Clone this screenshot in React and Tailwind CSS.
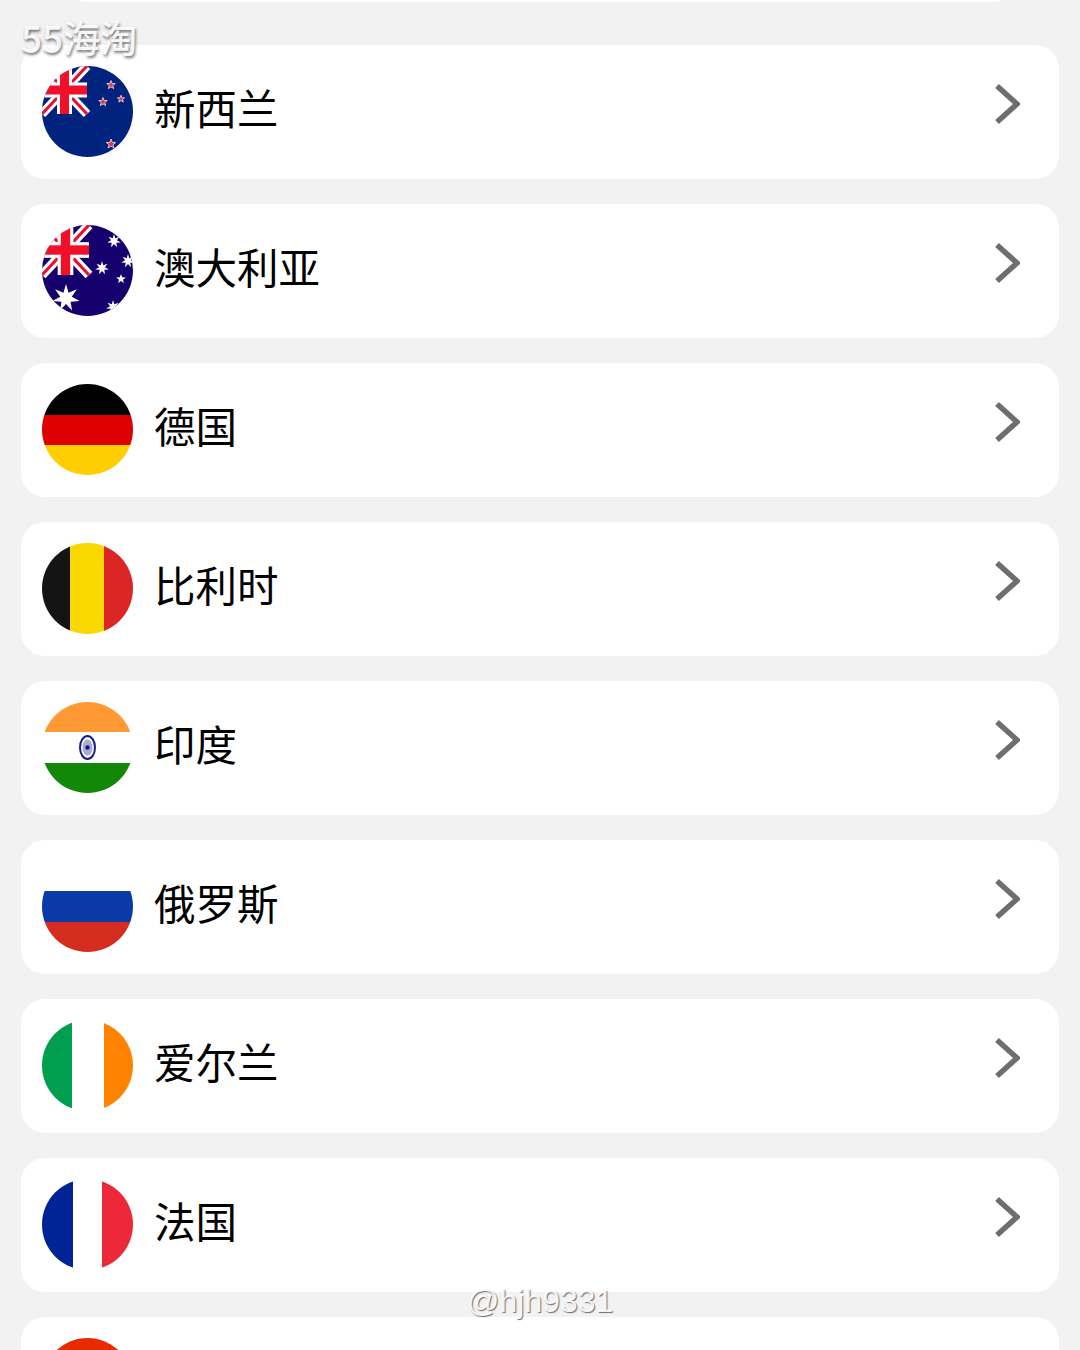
import React from 'react';

const starPoints = (cx, cy, r, n = 5, inner = 0.42) => {
  const pts = [];
  for (let i = 0; i < n * 2; i++) {
    const rad = i % 2 === 0 ? r : r * inner;
    const a = -Math.PI / 2 + (i * Math.PI) / n;
    pts.push(`${(cx + rad * Math.cos(a)).toFixed(2)},${(cy + rad * Math.sin(a)).toFixed(2)}`);
  }
  return pts.join(' ');
};

function UnionJack({ w, h }) {
  const t = w / 60;
  return (
    <g>
      <path d={`M0 0L${w} ${h}M${w} 0L0 ${h}`} stroke="#fff" strokeWidth={12 * t} />
      <path d={`M0 0L${w} ${h}M${w} 0L0 ${h}`} stroke="#e8112d" strokeWidth={4 * t} />
      <rect x={w / 2 - 10 * t} y="0" width={20 * t} height={h} fill="#fff" />
      <rect x="0" y={h / 2 - 10 * t} width={w} height={20 * t} fill="#fff" />
      <rect x={w / 2 - 6 * t} y="0" width={12 * t} height={h} fill="#f0102a" />
      <rect x="0" y={h / 2 - 6 * t} width={w} height={12 * t} fill="#f0102a" />
    </g>
  );
}

function NewZealand() {
  const stars = [[69, 19, 4.5], [61, 36, 4.5], [79, 33, 3.8], [69, 78, 5]];
  return (
    <>
      <rect width="91" height="91" fill="#00237d" />
      <UnionJack w={45} h={48} />
      {stars.map(([x, y, r]) => (
        <polygon key={`${x}-${y}`} points={starPoints(x, y, r)} fill="#e8304a" stroke="#fff" strokeWidth="0.7" />
      ))}
    </>
  );
}

function Australia() {
  const stars = [[72, 16, 7, 7], [86, 36, 7, 7], [60, 43, 7, 7], [79, 54, 5, 5], [71, 82, 7, 7], [24, 73, 14, 7]];
  return (
    <>
      <rect width="91" height="91" fill="#15006d" />
      <UnionJack w={47} h={50} />
      {stars.map(([x, y, r, n]) => (
        <polygon key={`${x}-${y}`} points={starPoints(x, y, r, n)} fill="#fff" />
      ))}
    </>
  );
}

const HStripes = ({ colors, stops }) => (
  <>
    {colors.map((c, i) => (
      <rect key={c + i} x="0" y={stops[i]} width="91" height={stops[i + 1] - stops[i]} fill={c} />
    ))}
  </>
);

const VStripes = ({ colors, stops }) => (
  <>
    {colors.map((c, i) => (
      <rect key={c + i} x={stops[i]} y="0" width={stops[i + 1] - stops[i]} height="91" fill={c} />
    ))}
  </>
);

function India() {
  return (
    <>
      <HStripes colors={['#ff9933', '#ffffff', '#138808']} stops={[0, 30, 61, 91]} />
      <ellipse cx="45.5" cy="45.5" rx="7.5" ry="11.5" fill="#fff" stroke="#1a1a8c" strokeWidth="2" />
      <ellipse cx="45.5" cy="45.5" rx="5" ry="8" fill="#a9a9d8" />
      <circle cx="45.5" cy="45.5" r="2.2" fill="#14148a" />
    </>
  );
}

const flags = {
  nz: <NewZealand />,
  au: <Australia />,
  de: <HStripes colors={['#000000', '#dd0000', '#ffce00']} stops={[0, 31, 61, 91]} />,
  be: <VStripes colors={['#141414', '#f8d800', '#dc2626']} stops={[0, 28, 62, 91]} />,
  in: <India />,
  ru: <HStripes colors={['#ffffff', '#0a3aa8', '#d42c1e']} stops={[0, 30, 61, 91]} />,
  ie: <VStripes colors={['#009e4f', '#ffffff', '#ff8200']} stops={[0, 30, 62, 91]} />,
  fr: <VStripes colors={['#002395', '#ffffff', '#ed2939']} stops={[0, 31, 60, 91]} />,
  red: <rect width="91" height="91" fill="#e82a00" />,
};

const countries = [
  { code: 'nz', name: '新西兰' },
  { code: 'au', name: '澳大利亚' },
  { code: 'de', name: '德国' },
  { code: 'be', name: '比利时' },
  { code: 'in', name: '印度' },
  { code: 'ru', name: '俄罗斯' },
  { code: 'ie', name: '爱尔兰' },
  { code: 'fr', name: '法国' },
  { code: 'red', name: '' },
];

function CountryRow({ code, name }) {
  return (
    <div className="flex h-[134px] shrink-0 items-start rounded-[24px] bg-white pl-[21px] pr-[39px]">
      <div className="mt-[21px] h-[91px] w-[91px] shrink-0 overflow-hidden rounded-full">
        <svg viewBox="0 0 91 91" className="block h-full w-full">{flags[code]}</svg>
      </div>
      <span className="ml-[21px] mt-[32px] flex-1 text-[41.5px] leading-[60px] text-black">{name}</span>
      <svg viewBox="0 0 26 44" className="mt-[37px] h-[44px] w-[26px] shrink-0 blur-[0.7px]" fill="none">
        <path d="M3 4L23 22L3 40" stroke="#6e6e6e" strokeWidth="5.5" />
      </svg>
    </div>
  );
}

export default function App() {
  return (
    <div className="relative h-[1350px] overflow-hidden bg-[#f2f2f2] font-['Noto_Sans_CJK_SC','Noto_Sans',sans-serif]">
      <div className="mx-[80px] h-[2px] rounded-b-[4px] bg-white"></div>
      <div className="mt-[43px] flex flex-col gap-[25px] px-[21px]">
        {countries.map((c) => (
          <CountryRow key={c.code} code={c.code} name={c.name} />
        ))}
      </div>
      <div className="absolute left-[21px] top-[10px] text-[37px] font-medium leading-[54px] text-white/90 [text-shadow:1px_2px_3px_rgba(0,0,0,0.55)]">55海淘</div>
      <div className="absolute left-[467px] top-[1283px] font-['Liberation_Sans',sans-serif] text-[32px] leading-[37px] text-white/90 [text-shadow:1px_1px_1px_rgba(0,0,0,0.55)]">@hjh9331</div>
    </div>
  );
}
